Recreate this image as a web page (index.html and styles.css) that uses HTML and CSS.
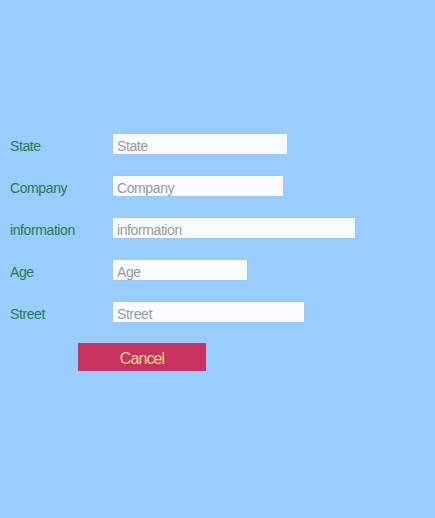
FILE: index.html
```html
<!DOCTYPE html>
<html>
<head>
<meta charset="utf-8">
<link rel="stylesheet" href="styles.css">
</head>
<body>
<form class="form">
  <div class="row"><label class="label">State</label><input class="field w-state" placeholder="State"></div>
  <div class="row"><label class="label">Company</label><input class="field w-company" placeholder="Company"></div>
  <div class="row"><label class="label">information</label><input class="field w-info" placeholder="information"></div>
  <div class="row"><label class="label">Age</label><input class="field w-age" placeholder="Age"></div>
  <div class="row"><label class="label">Street</label><input class="field w-street" placeholder="Street"></div>
  <div class="actions"><button type="button" class="cancel">Cancel</button></div>
</form>
</body>
</html>
```
FILE: styles.css
```css
html, body {
  margin: 0;
  padding: 0;
  background: #99ccff;
  height: 100%;
}
body {
  font-family: "Liberation Sans", Arial, sans-serif;
}
.form {
  display: flex;
  flex-direction: column;
  gap: 20px;
  padding: 133px 0 0 10px;
}
.row {
  display: flex;
  align-items: center;
  height: 22px;
}
.label {
  width: 102px;
  font-size: 14px;
  letter-spacing: -0.4px;
  line-height: 22px;
  padding-top: 4px;
  color: #287a4a;
}
.field {
  box-sizing: border-box;
  height: 22px;
  border: 1px solid #a3c6e8;
  border-radius: 2px;
  background: #f8fbff;
  padding: 3px 4px 0;
  font-family: "Liberation Sans", Arial, sans-serif;
  font-size: 14px;
  letter-spacing: -0.4px;
  color: #333;
  margin: 0;
}
.field::placeholder { color: #9a9a9a; }
.w-state { width: 176px; }
.w-company { width: 172px; }
.w-info { width: 244px; border-radius: 0; }
.w-age { width: 136px; border-radius: 0; }
.w-street { width: 193px; border-radius: 0; }
.actions {
  padding-left: 68px;
}
.cancel {
  width: 128px;
  height: 28px;
  border: none;
  background: #c8325f;
  color: #f3d98e;
  font-family: "Liberation Sans", Arial, sans-serif;
  font-size: 16px;
  letter-spacing: -0.9px;
  padding: 3px 0 0;
  margin: 0;
}
```
